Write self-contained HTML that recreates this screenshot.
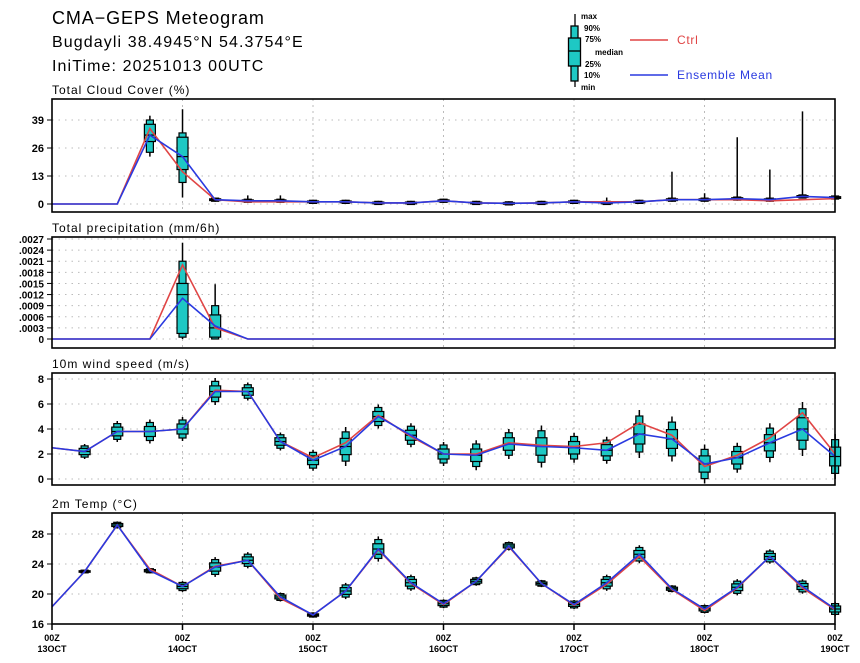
<!DOCTYPE html>
<html><head><meta charset="utf-8"><style>
body{margin:0;background:#fff;width:860px;height:663px;overflow:hidden}
svg{display:block}
text{font-family:"Liberation Sans",sans-serif}
</style></head><body>
<svg id="s" width="860" height="663" xmlns="http://www.w3.org/2000/svg">
<text x="52" y="24" font-size="18" letter-spacing="0.9">CMA−GEPS Meteogram</text>
<text x="52" y="47" font-size="16" letter-spacing="1.1">Bugdayli 38.4945°N 54.3754°E</text>
<text x="52" y="71" font-size="16" letter-spacing="1.1">IniTime: 20251013 00UTC</text>
<g stroke="#000" stroke-width="1.3">
<line x1="575" y1="14" x2="575" y2="87"/>
<rect x="571" y="26" width="7" height="55" fill="#1ec8c4"/>
<rect x="568.5" y="38" width="12" height="28" fill="#1ec8c4"/>
<line x1="568.5" y1="51" x2="580.5" y2="51"/>
</g>
<g font-size="8" font-weight="bold">
<text x="581" y="19">max</text><text x="584" y="31">90%</text><text x="585" y="42">75%</text>
<text x="595" y="55">median</text><text x="585" y="67">25%</text><text x="584" y="78">10%</text><text x="581" y="90">min</text>
</g>
<line x1="630" y1="40" x2="668" y2="40" stroke="#e04545" stroke-width="1.6"/>
<text x="677" y="44" font-size="12" fill="#e04545" letter-spacing="0.7">Ctrl</text>
<line x1="630" y1="75" x2="668" y2="75" stroke="#2a3ae0" stroke-width="1.6"/>
<text x="677" y="79" font-size="12" fill="#2a3ae0" letter-spacing="0.7">Ensemble Mean</text>
</svg>
<script>
const S=document.getElementById('s');const NS='http://www.w3.org/2000/svg';
function el(t,a,txt){const e=document.createElementNS(NS,t);for(const k in a)e.setAttribute(k,a[k]);if(txt!==undefined)e.textContent=txt;S.appendChild(e);return e;}
const X=i=>52+i*32.63;
function panel(o){
 const Y=v=>o.y0+(v-o.v0)*(o.y1-o.y0)/(o.v1-o.v0);
 el('text',{x:52,y:o.top-5,'font-size':12,'letter-spacing':1},o.title);
 for(const t of o.ticks){const y=Y(t);
  el('line',{x1:52,x2:835,y1:y,y2:y,stroke:'#bbb','stroke-dasharray':'1.5 5'});
  el('line',{x1:47,x2:52,y1:y,y2:y,stroke:'#000'});
  el('text',{x:44,y:y+4,'font-size':o.fs||11,'font-weight':'bold','text-anchor':'end'},o.fmt?o.fmt(t):t);}
 for(let d=1;d<6;d++){const x=52+d*130.5;el('line',{x1:x,x2:x,y1:o.top,y2:o.bot,stroke:'#bbb','stroke-dasharray':'2 4'});}
 o.box.forEach((b,i)=>{if(!b)return;const x=X(i);const[mn,p10,p25,md,p75,p90,mx]=b;
  el('line',{x1:x,x2:x,y1:Y(mx),y2:Y(mn),stroke:'#000','stroke-width':1.5});
  el('rect',{x:x-3.5,y:Y(p90),width:7,height:Math.max(1.5,Y(p10)-Y(p90)),fill:'#1ec8c4',stroke:'#000','stroke-width':1.2});
  el('rect',{x:x-5.5,y:Y(p75),width:11,height:Math.max(1.5,Y(p25)-Y(p75)),fill:'#1ec8c4',stroke:'#000','stroke-width':1.2});
  el('line',{x1:x-5.5,x2:x+5.5,y1:Y(md),y2:Y(md),stroke:'#000','stroke-width':1.2});});
 const pl=(a,c)=>el('polyline',{points:a.map((v,i)=>X(i)+','+Y(v)).join(' '),fill:'none',stroke:c,'stroke-width':1.6});
 pl(o.ctrl,'#e04545');pl(o.mean,'#2a3ae0');
 el('rect',{x:52,y:o.top,width:783,height:o.bot-o.top,fill:'none',stroke:'#000','stroke-width':1.6});
}
function mk(m,s,up){return m.map((v,i)=>{const a=s[i];if(a===null)return null;return [v-a*1.2,v-a*.9,v-a*.5,v,v+a*.5,v+a*.9,v+a*1.2+(up?up[i]||0:0)];});}
const cm=[0,0,0,32,22,2,1.5,1.5,1,1,.5,.5,1.5,.5,.3,.5,1,.5,1,2,2,2.5,2,3.5,3];
const cc=[0,0,0,35,15,2,1,1,1,1,.5,.5,1.5,.5,.3,.5,1,1,1,2,2,2,1.5,2,2.5];
const cb=mk(cm,cm.map((v,i)=>i<3?null:.8),[]);
cb[3]=[22,24,29,32,37,39,41];cb[4]=[3,10,16,22,31,33,44];
cb[19][6]=15;cb[20][6]=5;cb[21][6]=31;cb[22][6]=16;cb[23][6]=43;cb[7][6]=4;cb[6][6]=4;cb[17][6]=3;
panel({title:'Total Cloud Cover (%)',top:99,bot:212,y0:204,v0:0,y1:120,v1:39,ticks:[0,13,26,39],box:cb,mean:cm,ctrl:cc});
const pm=Array(25).fill(0);pm[4]=.0011;pm[5]=.00035;const pc=Array(25).fill(0);pc[4]=.002;pc[5]=.0003;
const pb=Array(25).fill(null);pb[4]=[0,.00005,.00015,.0012,.0015,.0021,.0026];pb[5]=[0,0,.00005,.0003,.00065,.0009,.00148];
panel({title:'Total precipitation (mm/6h)',top:237,bot:348,y0:339,v0:0,y1:239,v1:.0027,ticks:[0,.0003,.0006,.0009,.0012,.0015,.0018,.0021,.0024,.0027],fs:10,fmt:t=>t?t.toFixed(4).slice(1):'0',box:pb,mean:pm,ctrl:pc});
const wm=[2.5,2.2,3.8,3.8,4.0,7.0,7.0,3.0,1.5,2.6,5.0,3.5,2.0,1.9,2.8,2.6,2.5,2.3,3.6,3.2,1.2,1.7,2.9,4.0,1.8];
const wc=[2.5,2.2,3.8,3.8,4.0,7.1,7.0,3.0,1.7,2.9,5.1,3.4,2.0,2.0,2.9,2.7,2.6,2.9,4.5,3.5,1.0,1.9,3.3,5.3,2.0];
const ws=[null,.5,.7,.8,.8,.9,.6,.6,.7,1.3,.8,.8,.8,1,1,1.4,1,.9,1.6,1.5,1.3,1,1.3,1.8,1.5];
panel({title:'10m wind speed (m/s)',top:373,bot:485,y0:479,v0:0,y1:379,v1:8,ticks:[0,2,4,6,8],box:mk(wm,ws),mean:wm,ctrl:wc});
const tm=[18.3,23,29.2,23.1,21,23.6,24.5,19.6,17.2,20.4,26,21.5,18.7,21.7,26.4,21.4,18.6,21.5,25.3,20.7,18,20.9,25,21,18];
const tc=[18.3,23,29.2,23.3,21,23.7,24.5,19.4,17.2,20.4,25.9,21.4,18.6,21.7,26.3,21.4,18.5,21.3,25,20.6,17.8,20.8,25,20.8,17.9];
const ts=[null,.2,.4,.3,.6,1.1,.9,.5,.3,.9,1.4,.9,.5,.5,.5,.4,.5,.9,1,.4,.5,.9,.8,.8,.8];
panel({title:'2m Temp (°C)',top:513,bot:624,y0:624,v0:16,y1:534,v1:28,ticks:[16,20,24,28],box:mk(tm,ts),mean:tm,ctrl:tc});
const days=['13OCT','14OCT','15OCT','16OCT','17OCT','18OCT','19OCT'];
days.forEach((d,k)=>{const x=52+k*130.5;el('line',{x1:x,x2:x,y1:624,y2:630,stroke:'#000','stroke-width':1.5});
 el('text',{x:x,y:641,'font-size':9,'font-weight':'bold','text-anchor':'middle'},'00Z');
 el('text',{x:x,y:652,'font-size':9,'font-weight':'bold','text-anchor':'middle'},d);});
</script>
</body></html>
